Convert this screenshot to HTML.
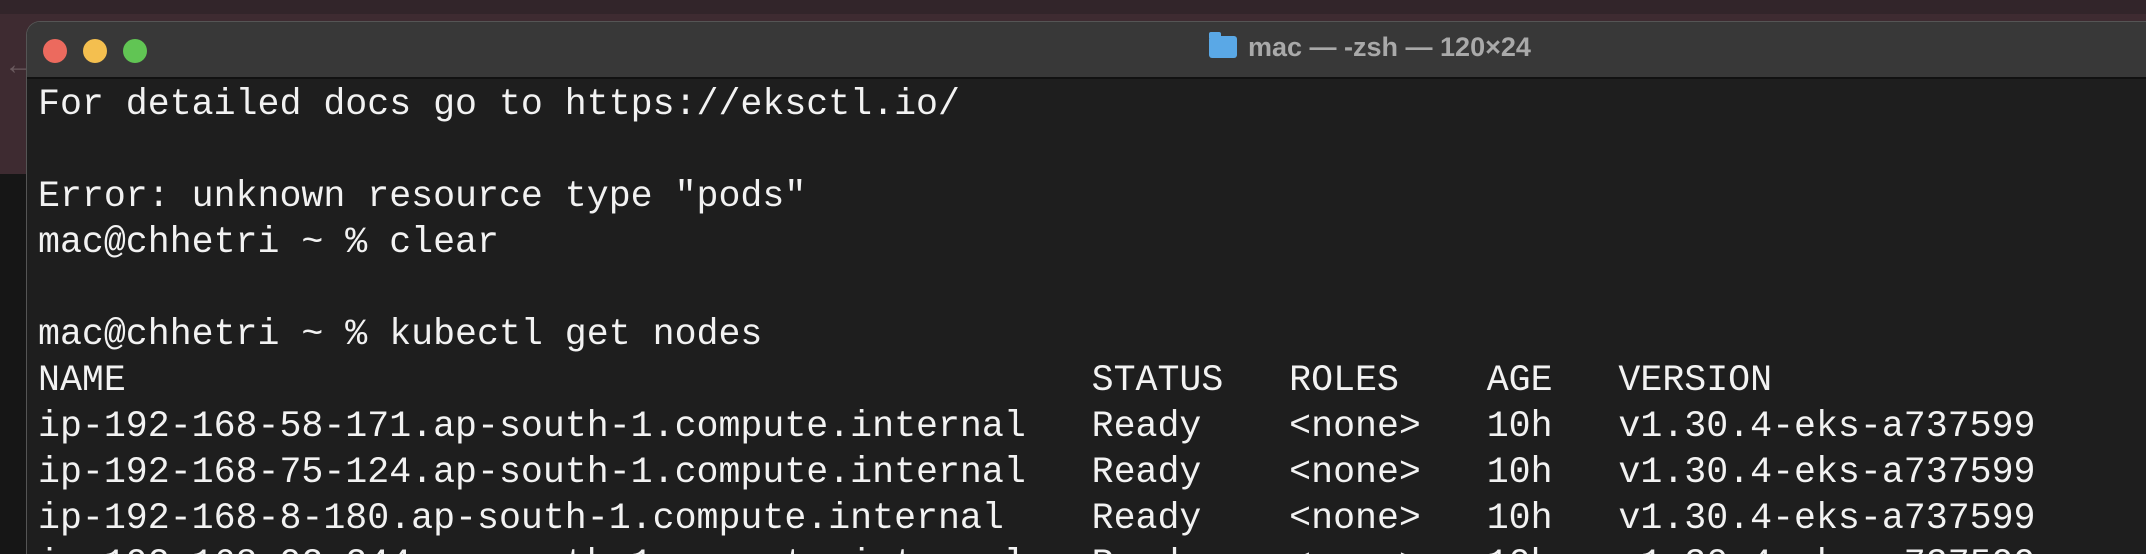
<!DOCTYPE html>
<html><head><meta charset="utf-8"><style>
html,body{margin:0;padding:0;width:2146px;height:554px;overflow:hidden;background:#161616;position:relative}
.top{position:absolute;left:0;top:0;width:2146px;height:14px;background:#32252a}
.top2{position:absolute;left:0;top:14px;width:2146px;height:160px;background:#3e2b31}
.win{position:absolute;left:26px;top:21px;width:2120px;height:533px;background:#1e1e1e;border-left:1px solid #555;border-top:1px solid #555;border-radius:14px 0 0 0;overflow:hidden}
.tb{height:55px;background:#383838;border-bottom:2px solid #111;position:relative}
.dot{position:absolute;top:17px;width:24px;height:24px;border-radius:50%}
.title{position:absolute;left:1182px;top:10px;font:bold 27px "Liberation Sans",sans-serif;color:#a9a9a9;white-space:nowrap}
.folder{display:inline-block;width:28px;height:22px;background:#5aa8e6;border-radius:3px;vertical-align:-2px;margin-right:11px;position:relative}
.folder:before{content:"";position:absolute;left:0;top:-4px;width:12px;height:6px;background:#5aa8e6;border-radius:2px 2px 0 0}
pre{position:absolute;left:11px;top:60px;margin:0;font:36.6px/46px "Liberation Mono",monospace;color:#f2f2f2}
</style></head><body>
<div class="top"></div><div class="top2"></div>
<div style="position:absolute;left:4px;top:48px;color:#6a5a5e;font:30px 'Liberation Sans',sans-serif">←</div>
<div class="win">
<div class="tb">
<div class="dot" style="left:16px;background:#ec6a5e"></div>
<div class="dot" style="left:56px;background:#f4bf4f"></div>
<div class="dot" style="left:96px;background:#61c554"></div>
<div class="title"><span class="folder"></span>mac — -zsh — 120×24</div>
</div>
<pre>For detailed docs go to https://eksctl.io/

Error: unknown resource type "pods"
mac@chhetri ~ % clear

mac@chhetri ~ % kubectl get nodes
NAME                                            STATUS   ROLES    AGE   VERSION
ip-192-168-58-171.ap-south-1.compute.internal   Ready    &lt;none&gt;   10h   v1.30.4-eks-a737599
ip-192-168-75-124.ap-south-1.compute.internal   Ready    &lt;none&gt;   10h   v1.30.4-eks-a737599
ip-192-168-8-180.ap-south-1.compute.internal    Ready    &lt;none&gt;   10h   v1.30.4-eks-a737599
ip-192-168-92-244.ap-south-1.compute.internal   Ready    &lt;none&gt;   10h   v1.30.4-eks-a737599</pre>
</div>
</body></html>
